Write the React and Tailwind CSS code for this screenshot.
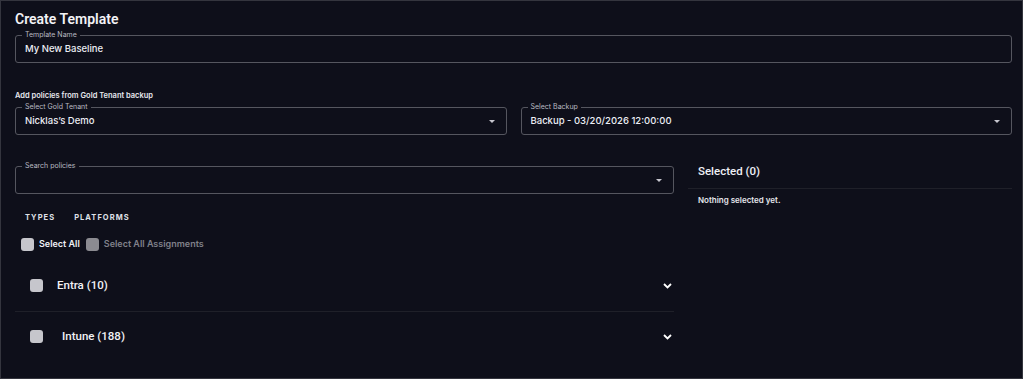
import React from "react";

const field = "font-['Inter',sans-serif]";

function Caret() {
  return (
    <svg width="6" height="3" viewBox="0 0 6 3" className="text-[#c7c7cf]">
      <path d="M0 0 L6 0 L3 3 Z" fill="currentColor" />
    </svg>
  );
}

function Chevron() {
  return (
    <svg width="9" height="6" viewBox="0 0 9 6" className="text-white">
      <path d="M1 1 L4.5 4.5 L8 1" fill="none" stroke="currentColor" strokeWidth="1.8" />
    </svg>
  );
}

function Field({ label, value, select, className = "" }) {
  return (
    <div className={`relative h-[28px] rounded-[3px] border border-[#55565f] ${className}`}>
      <span className={`absolute left-[6px] top-[-6px] bg-[#0e0f1a] px-[3px] text-[7px] leading-[10px] text-[#b9bac2] ${field}`}>
        {label}
      </span>
      <div className="flex h-full items-center justify-between pl-[9px] pr-[11px]">
        <span className={`text-[9.5px] font-medium text-[#eceef5] ${field}`}>{value}</span>
        {select && <Caret />}
      </div>
    </div>
  );
}

function Box({ light = true }) {
  return (
    <span className={`block h-[13px] w-[13px] rounded-[3px] ${light ? "bg-[#c6c6cc]" : "bg-[#8b8b91]"}`} />
  );
}

function Group({ name, indent }) {
  return (
    <div className="flex h-[50px] items-center justify-between pl-[15px] pr-[2px]">
      <div className="flex items-center">
        <Box />
        <span className={`${indent} text-[11.5px] font-medium text-[#f2f2f5] font-['Roboto',sans-serif]`}>{name}</span>
      </div>
      <Chevron />
    </div>
  );
}

export default function App() {
  return (
    <div className="h-[379px] w-[1023px] overflow-hidden border border-[#34353e] bg-[#0e0f1a] pl-[14px] pr-[10px] text-white">
      <h1 className="pt-[8px] text-[14px] font-semibold leading-[20px] text-[#f3f3f6] font-['Roboto',sans-serif]">
        Create Template
      </h1>

      <Field label="Template Name" value="My New Baseline" className="mt-[6px]" />

      <p className={`mt-[28px] text-[7.5px] font-semibold leading-[10px] text-[#e6e7ee] ${field}`}>
        Add policies from Gold Tenant backup
      </p>

      <div className="mt-[6px] grid grid-cols-2 gap-[14px]">
        <Field label="Select Gold Tenant" value="Nicklas’s Demo" select />
        <Field label="Select Backup" value="Backup - 03/20/2026 12:00:00" select />
      </div>

      <div className="mt-[31px] flex items-start gap-[14px]">
        <div className="w-[659px] shrink-0">
          <Field label="Search policies" value="" select />

          <div className={`mt-[18px] flex gap-[19px] pl-[10px] text-[7.5px] font-bold tracking-[0.14em] text-[#dfe0e8] ${field}`}>
            <span>TYPES</span>
            <span>PLATFORMS</span>
          </div>

          <div className={`mt-[14px] flex items-center pl-[6px] text-[9px] font-semibold ${field}`}>
            <Box />
            <span className="ml-[5px] text-[#eef0f6]">Select All</span>
            <span className="ml-[6px]"><Box light={false} /></span>
            <span className="ml-[5px] text-[#80818a]">Select All Assignments</span>
          </div>

          <div className="mt-[10px]">
            <Group name="Entra (10)" indent="ml-[14px]" />
            <div className="h-px bg-[#1f2029]" />
            <Group name="Intune (188)" indent="ml-[19px]" />
          </div>
        </div>

        <div className="flex-1">
          <div className="mt-[-2px] pl-[10px] text-[11.5px] font-medium leading-[14px] text-[#eef0f6] font-['Roboto',sans-serif]">
            Selected (0)
          </div>
          <div className="mt-[10px] h-px bg-[#1f2029]" />
          <div className={`mt-[6px] pl-[10px] text-[8px] font-semibold leading-[10px] text-[#e6e7ee] ${field}`}>
            Nothing selected yet.
          </div>
        </div>
      </div>
    </div>
  );
}
